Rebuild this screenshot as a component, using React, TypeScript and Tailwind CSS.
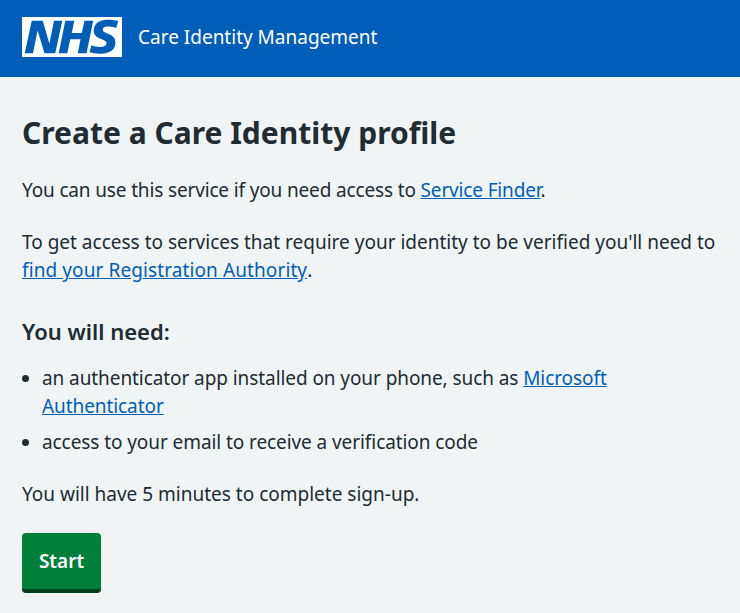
const link = "text-[#005eb8] underline";
export default function App() {
  return (
    <div className="min-h-[613px] bg-[#f0f4f5] text-[#212b32] text-[19px] leading-[28px]" style={{ fontFamily: '"Noto Sans", "Open Sans", sans-serif' }}>
      <header className="h-[77px] bg-[#005eb8] flex items-center px-[22px] pb-[3px] gap-4">
        <svg viewBox="0 0 40 16" className="w-[100px] h-[40px]">
          <path fill="#fff" d="M0 0h40v16H0z" />
          <path fill="#005eb8" d="M3.9 1.5h4.4l2.6 9h.1l1.8-9h3.3l-2.8 13H9l-2.7-8.9h-.1l-1.8 8.9H1.1M17.3 1.5h3.6l-1 4.9h4L25 1.5h3.5l-2.7 13h-3.5l1.1-5.6h-4.1l-1.2 5.6h-3.4M37.7 4.4c-.7-.3-1.6-.6-2.9-.6-1.4 0-2.5.2-2.5 1.3 0 1.8 5.1 1.2 5.1 5.1 0 3.6-3.3 4.5-6.4 4.5-1.3 0-2.9-.3-4-.7l.8-2.7c.7.4 2.1.7 3.2.7s2.8-.2 2.8-1.5c0-2.1-5.1-1.3-5.1-5 0-3.4 2.9-4.4 5.8-4.4 1.6 0 3.1.2 4 .6" />
        </svg>
        <span className="text-white text-[19px] leading-[28px] mb-[1px]">Care Identity Management</span>
      </header>
      <main className="px-[22px] pt-[36px]">
        <h1 className="text-[30px] leading-[40px] font-bold">Create a Care Identity profile</h1>
        <p className="mt-[23px] tracking-[-0.15px]">You can use this service if you need access to <a className={link} href="#">Service Finder</a>.</p>
        <p className="mt-[24px]">To get access to services that require your identity to be verified you'll need to <a className={`${link} tracking-[0.1px]`} href="#">find your Registration Authority</a>.</p>
        <h2 className="mt-[31px] text-[22px] leading-[32px] font-semibold">You will need:</h2>
        <ul className="mt-[17px] list-disc pl-[20px] tracking-[-0.08px]">
          <li>an authenticator app installed on your phone, such as <a className={link} href="#">Microsoft Authenticator</a></li>
          <li className="mt-[8px]">access to your email to receive a verification code</li>
        </ul>
        <p className="mt-[24px]">You will have 5 minutes to complete sign-up.</p>
        <button className="mt-[25px] w-[79px] h-[60px] bg-[#007f3b] text-white font-semibold rounded-[4px] border-b-4 border-[#00401e]">Start</button>
      </main>
    </div>
  );
}
